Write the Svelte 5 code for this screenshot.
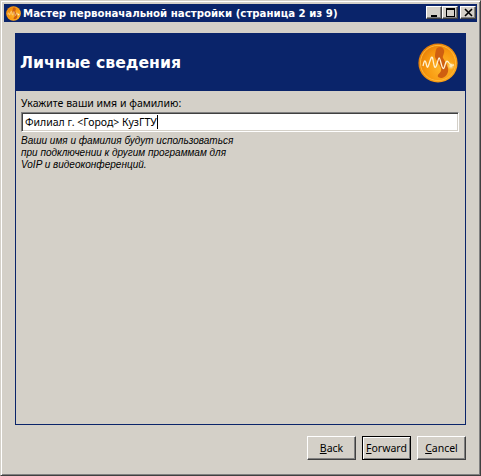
<script>
  const title = 'Мастер первоначальной настройки (страница 2 из 9)';
</script>

{#snippet logo(size, id)}
  <svg class="logo" width={size} height={size} viewBox="0 0 40 40">
    <defs>
      <radialGradient id="coin-{id}" cx="0.62" cy="0.62" r="0.65">
        <stop offset="0" stop-color="#ffb92c" />
        <stop offset="0.65" stop-color="#f8980f" />
        <stop offset="1" stop-color="#e57f08" />
      </radialGradient>
      <radialGradient id="spot-{id}">
        <stop offset="0" stop-color="#fffbe8" />
        <stop offset="1" stop-color="#ffd060" stop-opacity="0" />
      </radialGradient>
    </defs>
    <circle cx="20" cy="20" r="19.6" fill="url(#coin-{id})" />
    <circle cx="20" cy="20" r="17.6" fill="none" stroke="#ffb93c" stroke-width="1" />
    <path d="M19 5c3-2 6-1 7 2s-2 6-1 8 4 6 5 10c1 5-2 9-6 10-3 0-5-1-4-3s4-3 3-7-5-7-6-11c0-4 1-8 2-9z" fill="#cf5f10" />
    <path d="M5 23c1-5 2-7 3-3s1 7 3 1 3-10 4-4 2 11 4 4 2-9 4-1 3 6 4 2 2-5 4-2 3 2 5 2" fill="none" stroke="#fff1d0" stroke-width="1.3" stroke-linejoin="round" />
    <circle cx="33" cy="23" r="4" fill="url(#spot-{id})" />
  </svg>
{/snippet}

<div class="window">
  <div class="titlebar">
    {@render logo(15, 'small')}
    <span class="title">{title}</span>
    <div class="controls">
      <button class="ctl" aria-label="Свернуть">
        <svg width="9" height="9" viewBox="0 0 9 9"><path d="M1 7h6v2H1z" fill="#000" /></svg>
      </button>
      <button class="ctl" aria-label="Развернуть">
        <svg width="9" height="9" viewBox="0 0 9 9"><path d="M0 0h9v9H0zM1 2v6h7V2z" fill="#000" fill-rule="evenodd" /></svg>
      </button>
      <button class="ctl close" aria-label="Закрыть">
        <svg width="9" height="9" viewBox="0 0 9 9"><path d="M1 1l7 7M8 1L1 8" stroke="#000" stroke-width="1.6" /></svg>
      </button>
    </div>
  </div>

  <div class="body">
    <section class="panel">
      <header class="banner">
        <h1>Личные сведения</h1>
        {@render logo(40, 'big')}
      </header>
      <div class="content">
        <label for="name">Укажите ваши имя и фамилию:</label>
        <div class="field">
          <span id="name" class="value">Филиал г. &lt;Город&gt; КузГТУ</span><span class="caret"></span>
        </div>
        <p class="hint">
          Ваши имя и фамилия будут использоваться<br />
          при подключении к другим программам для<br />
          VoIP и видеоконференций.
        </p>
      </div>
    </section>

    <div class="actions">
      <button class="btn"><u>B</u>ack</button>
      <button class="btn default"><u>F</u>orward</button>
      <button class="btn"><u>C</u>ancel</button>
    </div>
  </div>
</div>

<style>
  :global(body) {
    background: #d4d0c8;
  }

  .window {
    box-sizing: border-box;
    width: 481px;
    height: 476px;
    display: flex;
    flex-direction: column;
    background: #d4d0c8;
    border: 1px solid;
    border-color: #d4d0c8 #404040 #404040 #d4d0c8;
    box-shadow: inset 1px 1px 0 #fff, inset -1px -1px 0 #808080;
    padding: 3px;
    font-family: "Noto Sans", sans-serif;
    color: #000;
  }

  .titlebar {
    height: 18px;
    flex: none;
    display: flex;
    align-items: center;
    gap: 2px;
    padding: 0 1px 0 2px;
    background: #0a246a;
    color: #fff;
    font-family: "DejaVu Sans", sans-serif;
    font-size: 10.2px;
    font-weight: bold;
  }

  .title {
    flex: 1;
    white-space: nowrap;
  }

  .logo {
    flex: none;
    display: block;
  }

  .controls {
    display: flex;
    margin-bottom: 1px;
  }

  .ctl {
    box-sizing: border-box;
    width: 16px;
    height: 13px;
    padding: 0;
    display: flex;
    align-items: center;
    justify-content: center;
    background: #d4d0c8;
    border: 1px solid;
    border-color: #fff #404040 #404040 #fff;
    box-shadow: inset -1px -1px 0 #808080;
  }

  .close {
    margin-left: 2px;
  }

  .body {
    flex: 1;
    display: flex;
    flex-direction: column;
    padding: 11px 11px 12px;
    min-height: 0;
  }

  .panel {
    flex: 1;
    border: 1px solid #0a246a;
    display: flex;
    flex-direction: column;
    min-height: 0;
  }

  .banner {
    height: 57px;
    flex: none;
    display: flex;
    align-items: center;
    justify-content: space-between;
    padding: 0 7px 0 4px;
    background: #0a246a;
    color: #fff;
  }

  h1 {
    margin: 0;
    font-family: "DejaVu Sans", sans-serif;
    font-size: 15.7px;
    font-weight: bold;
  }

  .content {
    padding: 6px 6px 0 5px;
    font-size: 10.5px;
  }

  label {
    display: block;
    line-height: 13px;
  }

  .field {
    box-sizing: border-box;
    height: 20px;
    margin-top: 2px;
    display: flex;
    align-items: center;
    padding-left: 3px;
    background: #fff;
    border: 1px solid;
    border-color: #808080 #fff #fff #808080;
    box-shadow: inset 1px 1px 0 #404040, inset -1px -1px 0 #d4d0c8;
    white-space: nowrap;
  }

  .caret {
    width: 1px;
    height: 14px;
    background: #000;
  }

  .hint {
    margin: 3px 0 0;
    font-family: "Liberation Sans", sans-serif;
    font-size: 10px;
    font-style: italic;
    line-height: 12px;
  }

  .actions {
    flex: none;
    display: flex;
    justify-content: flex-end;
    gap: 6px;
    margin-top: 11px;
  }

  .btn {
    box-sizing: border-box;
    width: 49px;
    height: 24px;
    padding: 0;
    font: 10.5px "Noto Sans", sans-serif;
    color: #000;
    background: #d4d0c8;
    border: 1px solid;
    border-color: #fff #404040 #404040 #fff;
    box-shadow: inset -1px -1px 0 #808080;
  }

  .default {
    border-color: #000;
    box-shadow: inset 1px 1px 0 #fff, inset -1px -1px 0 #808080;
  }
</style>
